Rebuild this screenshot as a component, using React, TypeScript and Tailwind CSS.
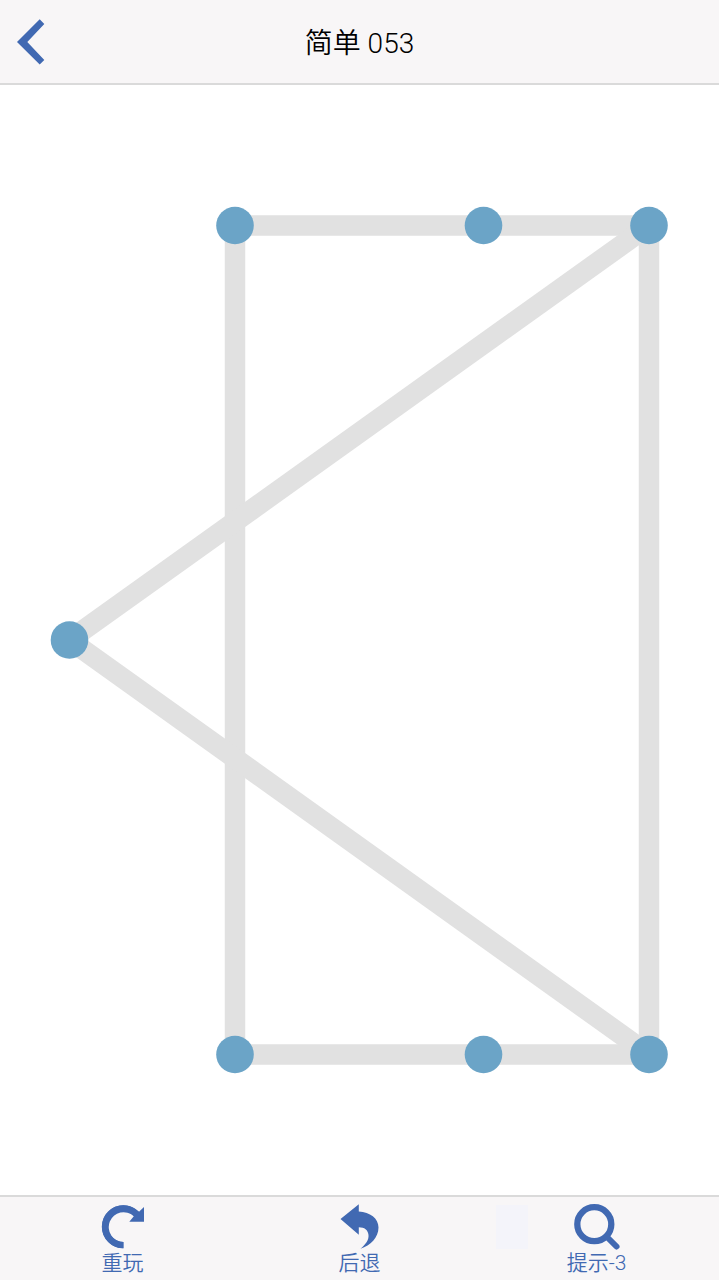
import type { ReactNode } from 'react';

type Point = [number, number];

const nodes: Point[] = [
  [235, 140.5],
  [483.5, 140.5],
  [649, 140.5],
  [69.5, 555],
  [235, 969.5],
  [483.5, 969.5],
  [649, 969.5],
];

const edges: [number, number][] = [
  [0, 1],
  [1, 2],
  [0, 4],
  [2, 3],
  [3, 6],
  [2, 6],
  [4, 5],
  [5, 6],
];

function ToolButton({ label, children }: { label: string; children: ReactNode }) {
  return (
    <button
      type="button"
      className="flex flex-col items-center pt-1.5 pb-[5px] text-[21px] leading-6 font-[350] text-[#4169b2]"
    >
      <svg viewBox="0 0 48 48" className="size-12" fill="currentColor" aria-hidden="true">
        {children}
      </svg>
      <span>{label}</span>
    </button>
  );
}

function Board() {
  return (
    <svg viewBox="0 0 719 1110" className="block h-auto w-full" role="img">
      <g stroke="#e1e1e1" strokeWidth="20.5">
        {edges.map(([a, b]) => (
          <line key={`${a}-${b}`} x1={nodes[a][0]} y1={nodes[a][1]} x2={nodes[b][0]} y2={nodes[b][1]} />
        ))}
      </g>
      <g fill="#6ba4c7">
        {nodes.map(([x, y]) => (
          <circle key={`${x}-${y}`} cx={x} cy={y} r="18.8" />
        ))}
      </g>
    </svg>
  );
}

export default function App() {
  return (
    <div className="flex min-h-screen flex-col bg-white font-['Roboto','Noto_Sans_CJK_SC',sans-serif]">
      <header className="grid grid-cols-[1fr_auto_1fr] items-center border-b-2 border-[#dadada] bg-[#f8f6f7]">
        <button type="button" aria-label="返回" className="justify-self-start py-[18px] pl-4 text-[#4169b2]">
          <svg viewBox="0 0 30 47" className="h-[47px] w-[30px]" fill="currentColor" aria-hidden="true">
            <path d="M1 24 23.7 1.3 28.3 6 11.3 24 28.3 42 23.7 46.5Z" />
          </svg>
        </button>
        <h1 className="pt-1 text-[28px] leading-9 font-[350] text-black">简单 053</h1>
      </header>

      <main className="flex flex-1 flex-col justify-center">
        <Board />
      </main>

      <footer className="relative border-t-2 border-[#dadada] bg-[#f8f6f7] px-1">
        <div className="absolute top-2 left-[69%] h-11 w-8 bg-[#f4f4fa]" />
        <nav className="relative grid grid-cols-3">
          <ToolButton label="重玩">
            <path d="M24.5 45.2A21.5 21.5 0 1 1 40 8.8L45 4V18.8H30.3L34.8 13.2A14.9 14.9 0 1 0 24.5 39Z" />
            <circle
              cx="24.3"
              cy="23.7"
              r="18.4"
              fill="none"
              stroke="currentColor"
              strokeWidth="6.2"
              strokeDasharray="72.2 200"
              transform="rotate(90 24.3 23.7)"
            />
          </ToolButton>
          <ToolButton label="后退">
            <path d="M4.5 15.9 22.8 1.3V8.5C34 9 42.5 15.5 42.5 24.5 42.5 34.5 34.5 42.5 24.5 45.8 29.5 41.5 33 37 32.5 32 32 27 28.5 24.3 22.8 24.3V31.7Z" />
          </ToolButton>
          <ToolButton label="提示-3">
            <circle cx="21.3" cy="21.2" r="17" fill="none" stroke="currentColor" strokeWidth="6.3" />
            <path d="M33.5 33.5 43.5 43.5" stroke="currentColor" strokeWidth="6" strokeLinecap="round" />
          </ToolButton>
        </nav>
      </footer>
    </div>
  );
}
